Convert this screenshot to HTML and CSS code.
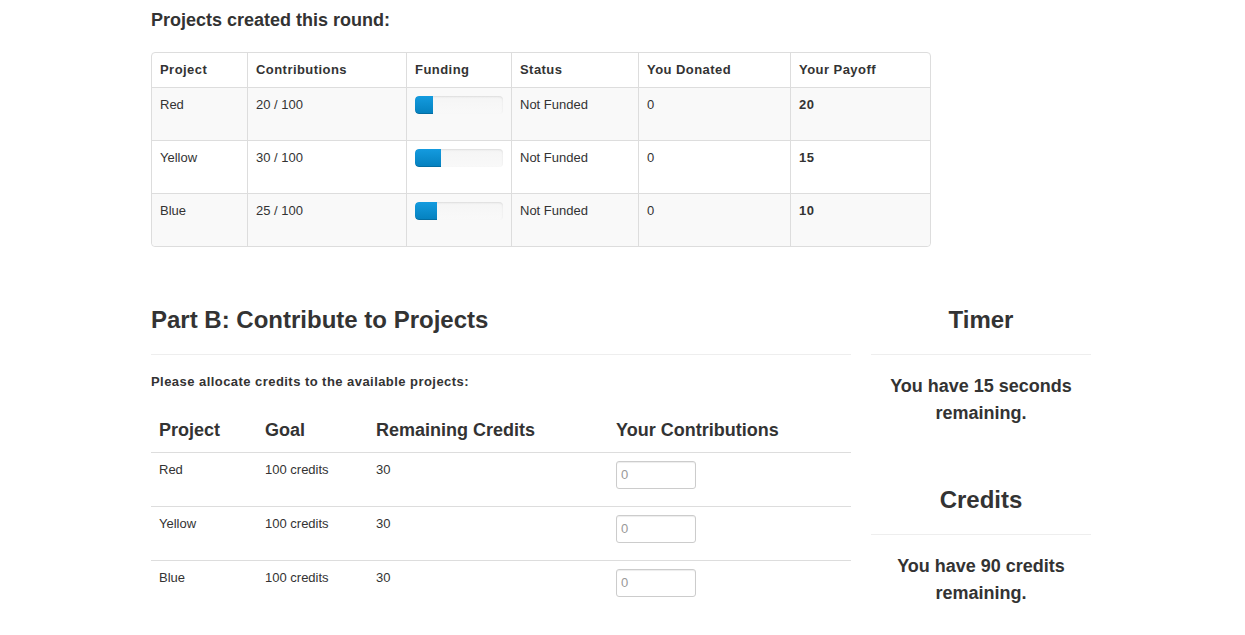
FILE: index.html
```html
<!DOCTYPE html>
<html>
<head>
<meta charset="utf-8">
<title>Projects</title>
<link rel="stylesheet" href="styles.css">
</head>
<body>
<div class="container">
  <h3 class="round-title">Projects created this round:</h3>
  <table class="summary">
    <colgroup>
      <col class="c1"><col class="c2"><col class="c3"><col class="c4"><col class="c5"><col class="c6">
    </colgroup>
    <thead>
      <tr><th>Project</th><th>Contributions</th><th>Funding</th><th>Status</th><th>You Donated</th><th>Your Payoff</th></tr>
    </thead>
    <tbody>
      <tr class="odd"><td>Red</td><td>20 / 100</td><td><div class="progress"><div class="bar" style="width:20%"></div></div></td><td>Not Funded</td><td>0</td><td><b>20</b></td></tr>
      <tr><td>Yellow</td><td>30 / 100</td><td><div class="progress"><div class="bar" style="width:30%"></div></div></td><td>Not Funded</td><td>0</td><td><b>15</b></td></tr>
      <tr class="odd"><td>Blue</td><td>25 / 100</td><td><div class="progress"><div class="bar" style="width:25%"></div></div></td><td>Not Funded</td><td>0</td><td><b>10</b></td></tr>
    </tbody>
  </table>

  <div class="row">
    <div class="main">
      <div class="page-header"><h2>Part B: Contribute to Projects</h2></div>
      <p class="lead-note">Please allocate credits to the available projects:</p>
      <table class="contrib">
        <colgroup><col class="d1"><col class="d2"><col class="d3"><col class="d4"></colgroup>
        <thead>
          <tr><th>Project</th><th>Goal</th><th>Remaining Credits</th><th>Your Contributions</th></tr>
        </thead>
        <tbody>
          <tr><td>Red</td><td>100 credits</td><td>30</td><td><input type="text" placeholder="0"></td></tr>
          <tr><td>Yellow</td><td>100 credits</td><td>30</td><td><input type="text" placeholder="0"></td></tr>
          <tr><td>Blue</td><td>100 credits</td><td>30</td><td><input type="text" placeholder="0"></td></tr>
        </tbody>
      </table>
    </div>
    <div class="side">
      <div class="page-header center"><h2>Timer</h2></div>
      <h3 class="side-text timer-text">You have 15 seconds remaining.</h3>
      <div class="page-header center"><h2>Credits</h2></div>
      <h3 class="side-text">You have 90 credits remaining.</h3>
    </div>
  </div>
</div>
</body>
</html>
```

FILE: styles.css
```css
html, body {
  margin: 0;
  padding: 0;
  background: #fff;
}
body {
  padding-right: 3px;
  font-family: "Liberation Sans", Arial, sans-serif;
  font-size: 13px;
  line-height: 18px;
  color: #333;
}
.container {
  width: 940px;
  margin: 0 auto;
  padding-top: 7px;
}
.round-title {
  margin: 0 0 18px 0;
  font-size: 18px;
  line-height: 27px;
  font-weight: bold;
}
table {
  border-spacing: 0;
  table-layout: fixed;
}
.summary {
  width: 780px;
  border: 1px solid #ddd;
  border-radius: 4px;
  border-collapse: separate;
  margin: 0;
}
.summary col.c1 { width: 95px; }
.summary col.c2 { width: 159px; }
.summary col.c3 { width: 105px; }
.summary col.c4 { width: 127px; }
.summary col.c5 { width: 152px; }
.summary col.c6 { width: 140px; }
.summary th, .summary td {
  padding: 8px;
  text-align: left;
  vertical-align: top;
  border-left: 1px solid #ddd;
  border-top: 1px solid #ddd;
}
.summary th, .summary b {
  font-weight: bold;
  letter-spacing: 0.45px;
}
.summary thead th { border-top: 0; }
.summary th:first-child, .summary td:first-child { border-left: 0; }
.summary tr.odd td { background: #f9f9f9; }
.summary tbody tr:last-child td:first-child { border-bottom-left-radius: 4px; }
.summary tbody tr:last-child td:last-child { border-bottom-right-radius: 4px; }
.progress {
  height: 18px;
  margin-bottom: 18px;
  border-radius: 4px;
  background: linear-gradient(to bottom, #f5f5f5, #f9f9f9);
  box-shadow: inset 0 1px 2px rgba(0,0,0,0.1);
  overflow: hidden;
}
.bar {
  height: 18px;
  background: linear-gradient(to bottom, #149bdf, #0480be);
  box-shadow: inset 0 -1px 0 rgba(0,0,0,0.15);
  border-radius: 4px 0 0 4px;
}
.row {
  display: flex;
  gap: 20px;
  margin-top: 53px;
}
.main { width: 700px; }
.side { width: 220px; }
.page-header {
  padding-top: 2px;
  padding-bottom: 16px;
  border-bottom: 1px solid #eee;
  margin-bottom: 18px;
}
.page-header h2 {
  margin: 0;
  font-size: 24px;
  line-height: 36px;
  font-weight: bold;
}
.center { text-align: center; }
.lead-note {
  margin: 0 0 18px 0;
  font-weight: bold;
  letter-spacing: 0.45px;
}
.contrib {
  width: 700px;
  border-collapse: separate;
}
.contrib col.d1 { width: 106px; }
.contrib col.d2 { width: 111px; }
.contrib col.d3 { width: 240px; }
.contrib col.d4 { width: 243px; }
.contrib th, .contrib td {
  padding: 8px;
  text-align: left;
  vertical-align: top;
  border-top: 1px solid #ddd;
}
.contrib thead th {
  border-top: 0;
  font-size: 18px;
  line-height: 27px;
  font-weight: bold;
  vertical-align: bottom;
}
.contrib input {
  box-sizing: content-box;
  width: 70px;
  height: 18px;
  padding: 4px;
  margin: 0 0 9px 0;
  border: 1px solid #ccc;
  border-radius: 3px;
  box-shadow: inset 0 1px 1px rgba(0,0,0,0.075);
  font-family: "Liberation Sans", Arial, sans-serif;
  font-size: 13px;
  line-height: 18px;
  color: #555;
  vertical-align: top;
  background: #fff;
}
.contrib input::placeholder { color: #999; }
.side-text {
  margin: 0;
  text-align: center;
  font-size: 18px;
  line-height: 27px;
  font-weight: bold;
}
.timer-text { margin-bottom: 53px; }
```
